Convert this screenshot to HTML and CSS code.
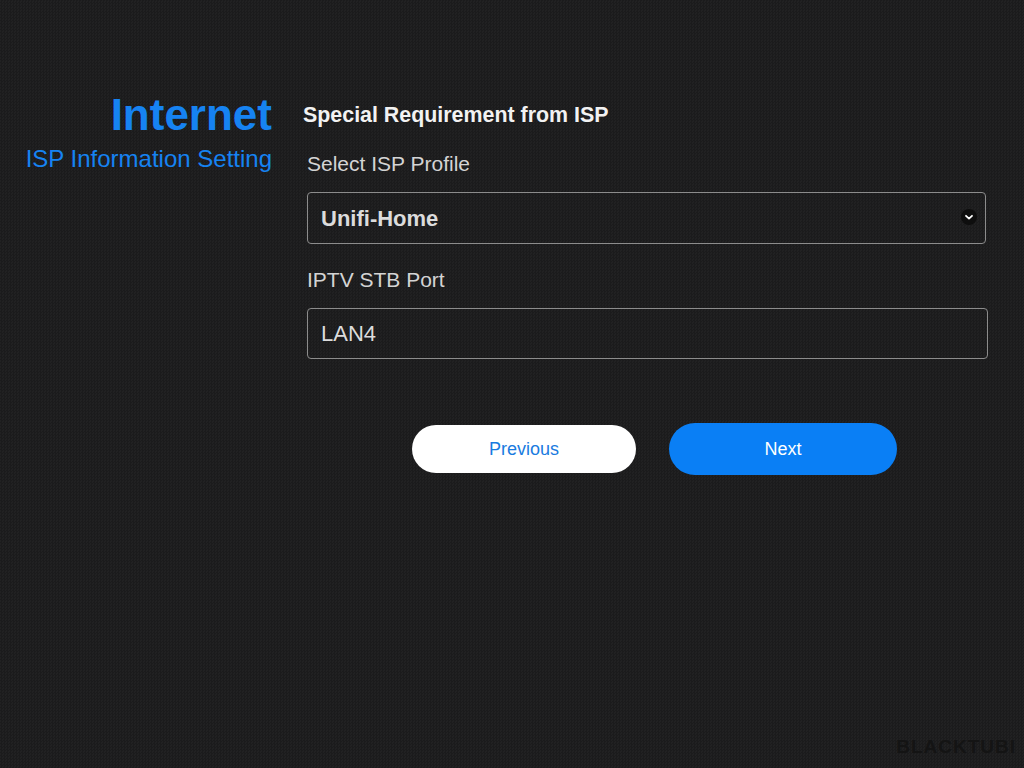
FILE: index.html
```html
<!DOCTYPE html>
<html lang="en">
<head>
    <meta charset="UTF-8">
    <meta name="viewport" content="width=device-width, initial-scale=1.0">
    <title>Internet - ISP Information Setting</title>
    <link rel="stylesheet" href="styles.css">
</head>
<body>
    <div class="page">
        <div class="side">
            <h1 class="side-title">Internet</h1>
            <p class="side-sub">ISP Information Setting</p>
        </div>

        <form class="panel" id="ispForm">
            <h2 class="panel-title">Special Requirement from ISP</h2>

            <div class="field">
                <label for="ispProfile">Select ISP Profile</label>
                <div class="select-wrap">
                    <select id="ispProfile" name="ispProfile">
                        <option value="unifi-home">Unifi-Home</option>
                        <option value="unifi-biz">Unifi-Business</option>
                        <option value="maxis">Maxis</option>
                        <option value="none">None</option>
                    </select>
                    <span class="chevron">
                        <svg width="16" height="16" viewBox="0 0 16 16">
                            <circle cx="8" cy="8" r="8" fill="#0e0e0e"/>
                            <path d="M5 6.8 L8 9.6 L11 6.8" fill="none" stroke="#fff" stroke-width="1.8" stroke-linecap="round" stroke-linejoin="round"/>
                        </svg>
                    </span>
                </div>
            </div>

            <div class="field">
                <label for="stbPort">IPTV STB Port</label>
                <input type="text" id="stbPort" name="stbPort" value="LAN4">
            </div>

            <div class="actions">
                <button type="button" class="btn btn-prev">Previous</button>
                <button type="submit" class="btn btn-next">Next</button>
            </div>
        </form>
    </div>

    <div class="watermark">BLACKTUBI</div>
</body>
</html>
```

FILE: styles.css
```css
html, body {
    height: 100%;
}

body {
    margin: 0;
    padding: 0;
    background-color: #1d1d1e;
    background-image: repeating-conic-gradient(#1b1b1c 0% 25%, #212122 0% 50%);
    background-size: 3px 3px;
    font-family: "Liberation Sans", Arial, sans-serif;
    color: #d6d6d6;
    overflow: hidden;
}

.page {
    display: flex;
    gap: 31px;
    padding-top: 89px;
}

.side {
    width: 272px;
    text-align: right;
}

.side-title {
    margin: 0;
    font-size: 44px;
    line-height: 52px;
    font-weight: bold;
    color: #1683f2;
}

.side-sub {
    margin: 3px 0 0;
    font-size: 24px;
    line-height: 30px;
    color: #1683f2;
}

.panel {
    width: 684px;
    padding-top: 14px;
}

.panel-title {
    margin: 0 0 25px;
    font-size: 21.4px;
    line-height: 24px;
    font-weight: bold;
    color: #f2f2f2;
}

.field {
    margin-left: 4px;
    margin-bottom: 24px;
}

.field label {
    display: block;
    font-size: 21px;
    line-height: 24px;
    color: #d4d4d4;
    margin-bottom: 16px;
}

.select-wrap {
    position: relative;
}

select, input {
    box-sizing: border-box;
    width: 100%;
    height: 52px;
    padding: 0 13px;
    border: 1.5px solid #8c8c8c;
    border-radius: 4px;
    background: transparent;
    color: #dcdcdc;
    font-family: inherit;
    font-size: 22px;
    outline: none;
}

select {
    -webkit-appearance: none;
    appearance: none;
    font-weight: bold;
    width: 679px;
}

select option {
    background: #222;
}

input {
    height: 51px;
    width: 681px;
}

.chevron {
    position: absolute;
    right: 10px;
    top: 17px;
    width: 16px;
    height: 16px;
    pointer-events: none;
}

.actions {
    display: flex;
    justify-content: center;
    align-items: center;
    gap: 33px;
    margin-top: 64px;
    padding-left: 19px;
}

.btn {
    border: none;
    border-radius: 26px;
    font-family: inherit;
    font-size: 18px;
    cursor: pointer;
}

.btn-prev {
    width: 224px;
    height: 48px;
    background-color: #ffffff;
    color: #1a7be0;
}

.btn-next {
    width: 228px;
    height: 52px;
    background-color: #0a7ff5;
    color: #ffffff;
}

.watermark {
    position: absolute;
    right: 8px;
    bottom: 10px;
    font-size: 19px;
    font-weight: bold;
    letter-spacing: 1px;
    color: #141414;
}
```
